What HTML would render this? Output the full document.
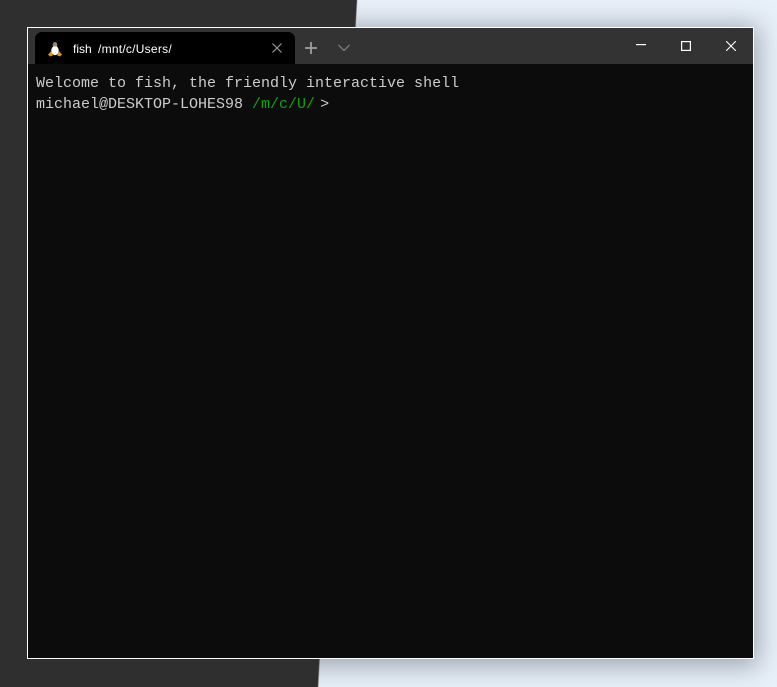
<!DOCTYPE html>
<html><head><meta charset="utf-8">
<style>
html,body{margin:0;padding:0;width:777px;height:687px;overflow:hidden;background:#e8f0f9;}
#bg{position:absolute;left:0;top:0;z-index:1;}
#shadow{position:absolute;left:27px;top:27px;width:727px;height:632px;box-shadow:0 3px 24px 4px rgba(50,60,80,.42);}
#win{position:absolute;left:27px;top:27px;width:725px;height:630px;border:1px solid #fff;background:#0c0c0c;z-index:2;}
#bar{position:absolute;left:0;top:0;width:725px;height:36px;background:#333333;}
#tab{position:absolute;left:7px;top:4px;width:260px;height:32px;background:#000;border-radius:7px 7px 0 0;}
.t{position:absolute;top:14px;font:12px/14px "Liberation Sans",sans-serif;color:#fff;white-space:pre;}
.term{position:absolute;left:8px;font:15px/21px "Liberation Mono",monospace;color:#cccccc;white-space:pre;}
svg{position:absolute;}
</style></head><body>
<div id="shadow"></div>
<svg id="bg" width="777" height="687" style="left:0;top:0"><polygon points="0,0 357,0 318,687 0,687" fill="#2f2f2f"/><path d="M357 0 L318 687" stroke="#777" stroke-width="1" fill="none" opacity=".5"/></svg>
<div id="win">
<div id="bar"></div>
<div id="tab"></div>
<svg style="left:19px;top:13px" width="16" height="17" viewBox="0 0 16 17">
<ellipse cx="8" cy="4" rx="2.3" ry="3" fill="#8a8a8a"/>
<path d="M5.5 6 L2.5 12 L13.5 12 L10.5 6Z" fill="#3a3a3a"/>
<ellipse cx="8" cy="9.5" rx="3.7" ry="4.6" fill="#fff"/>
<path d="M7 5 H9 L8 6.2Z" fill="#e8a312"/>
<path d="M1 13.5 L4 10.5 L6.2 14.2 L3 15.5Z" fill="#e09a10"/>
<path d="M15 13.5 L12 10.5 L9.8 14.2 L13 15.5Z" fill="#e09a10"/>
</svg>
<div class="t" style="left:45px">fish</div>
<div class="t" style="left:70px;letter-spacing:.25px">/mnt/c/Users/</div>
<svg style="left:244px;top:15px" width="10" height="10"><path d="M.5 .5 L9.5 9.5 M9.5 .5 L.5 9.5" stroke="#9a9a9a" stroke-width="1.2" fill="none"/></svg>
<svg style="left:277px;top:14px" width="12" height="12"><path d="M6 0 V12 M0 6 H12" stroke="#a0a0a0" stroke-width="1.8" fill="none"/></svg>
<svg style="left:310px;top:16px" width="12" height="8"><path d="M.5 1 L6 6.5 L11.5 1" stroke="#858585" stroke-width="1.2" fill="none"/></svg>
<svg style="left:608px;top:16px" width="10" height="2"><rect width="10" height="1.2" fill="#fff"/></svg>
<svg style="left:653px;top:13px" width="10" height="11"><rect x=".6" y=".6" width="8.8" height="8.8" stroke="#fff" stroke-width="1.2" fill="none"/></svg>
<svg style="left:698px;top:13px" width="10" height="10"><path d="M0 0 L10 10 M10 0 L0 10" stroke="#fff" stroke-width="1.1" fill="none"/></svg>
<div class="term" style="top:45px">Welcome to fish, the friendly interactive shell</div>
<div class="term" style="top:66px">michael@DESKTOP-LOHES98 <span style="color:#13a10e">/m/c/U/</span><span style="margin-left:5px">&gt;</span></div>
</div>
</body></html>
